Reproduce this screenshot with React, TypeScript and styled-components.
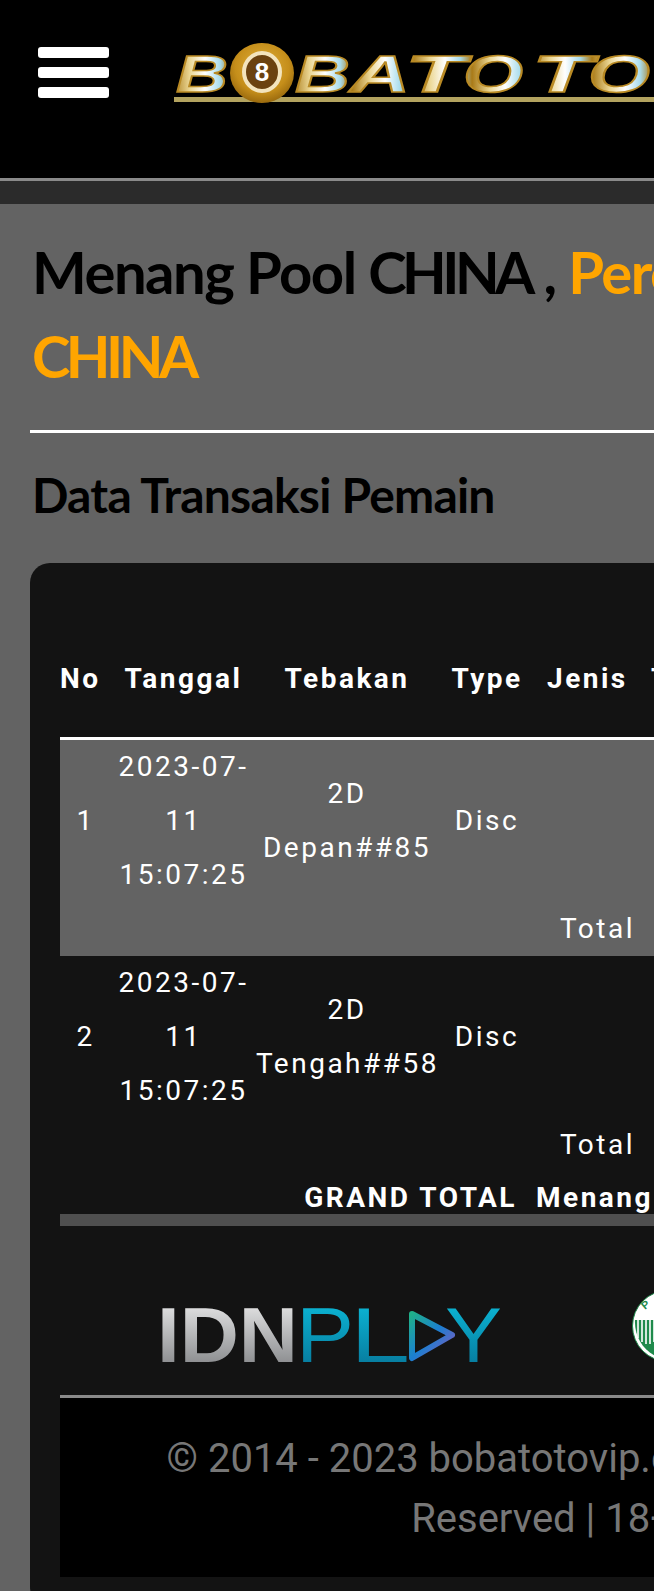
import React from 'react';
import styled, { createGlobalStyle } from 'styled-components';

const GlobalStyle = createGlobalStyle`
    html, body {
        margin: 0;
        width: 654px;
        height: 1591px;
        overflow: hidden;
        background: #636363;
    }
`;

type Row = {
    no: number;
    date: string;
    guess: string;
    type: string;
};

const rows: Row[] = [
    { no: 1, date: '2023-07-11 15:07:25', guess: '2D Depan##85', type: 'Disc' },
    { no: 2, date: '2023-07-11 15:07:25', guess: '2D Tengah##58', type: 'Disc' },
];

const BrandLetter = ({ x, w, c }: { x: number; w: number; c: string }) => (
    <BrandText x={x} y="49" textLength={w} lengthAdjust="spacingAndGlyphs">
        {c}
    </BrandText>
);

const BrandLogo = () => (
    <svg width="500" height="62" viewBox="0 0 500 62">
        <defs>
            <linearGradient id="gold" x1="0" x2="1" y1="0" y2="0" spreadMethod="repeat" gradientUnits="userSpaceOnUse" gradientTransform="scale(60 1)">
                <stop offset="0" stopColor="#a97a17" />
                <stop offset="0.3" stopColor="#ecd896" />
                <stop offset="0.55" stopColor="#ffffff" />
                <stop offset="0.8" stopColor="#a9dcec" />
                <stop offset="1" stopColor="#a97a17" />
            </linearGradient>
            <radialGradient id="ball" cx="0.5" cy="0.4" r="0.6">
                <stop offset="0" stopColor="#e3b23c" />
                <stop offset="0.7" stopColor="#c58e1a" />
                <stop offset="1" stopColor="#9a6a0e" />
            </radialGradient>
        </defs>
        <rect x="2" y="54" width="498" height="5" fill="#b3a35f" />
        <BrandLetter x={4} w={52} c="B" />
        <BrandLetter x={123} w={55} c="B" />
        <BrandLetter x={178} w={60} c="A" />
        <BrandLetter x={233} w={60} c="T" />
        <BrandLetter x={291} w={60} c="O" />
        <BrandLetter x={360} w={60} c="T" />
        <BrandLetter x={416} w={62} c="O" />
        <ellipse cx="90" cy="30" rx="32" ry="30" fill="url(#ball)" />
        <ellipse cx="90" cy="29" rx="18" ry="19" fill="#6b4210" stroke="#f3e4bd" strokeWidth="4" />
        <BallNumber x="90" y="38">8</BallNumber>
    </svg>
);

const IdnLogo = () => (
    <svg width="342" height="54" viewBox="0 0 342 54">
        <defs>
            <linearGradient id="silver" x1="0" x2="0" y1="0" y2="1">
                <stop offset="0" stopColor="#f4f4f4" />
                <stop offset="1" stopColor="#77797c" />
            </linearGradient>
            <linearGradient id="teal" x1="0" x2="0" y1="0" y2="1">
                <stop offset="0" stopColor="#0cc0de" />
                <stop offset="1" stopColor="#066f93" />
            </linearGradient>
            <linearGradient id="play" x1="0" x2="1" y1="0" y2="1">
                <stop offset="0" stopColor="#1fb08a" />
                <stop offset="0.5" stopColor="#1b7fd0" />
                <stop offset="1" stopColor="#8a58c0" />
            </linearGradient>
        </defs>
        <IdnText x="-3" y="54" fill="url(#silver)" textLength="141" lengthAdjust="spacingAndGlyphs">
            IDN
        </IdnText>
        <IdnThinText x="136" y="54" fill="url(#teal)" textLength="58" lengthAdjust="spacingAndGlyphs">
            P
        </IdnThinText>
        <IdnThinText x="190" y="54" fill="url(#teal)" textLength="60" lengthAdjust="spacingAndGlyphs">
            L
        </IdnThinText>
        <polygon points="252,6 292,27 252,50" fill="none" stroke="url(#play)" strokeWidth="6" strokeLinejoin="round" />
        <IdnThinText x="285" y="54" fill="url(#teal)" textLength="57" lengthAdjust="spacingAndGlyphs">
            Y
        </IdnThinText>
    </svg>
);

const SealLogo = () => (
    <svg width="72" height="72" viewBox="0 0 72 72">
        <circle cx="36" cy="36" r="35.5" fill="#fff" stroke="#1f8a4c" strokeWidth="1" />
        <SealLetter x="13" y="20" transform="rotate(-40 13 20)">P</SealLetter>
        <SealLetter x="24" y="13" transform="rotate(-20 24 13)">A</SealLetter>
        <path d="M3 30 H69 C70 50 56 68 36 69 C16 68 2 50 3 30 Z" fill="#1f8a4c" />
        <path d="M6 30 V48 M10 30 V52 M14 30 V54 M18 30 V54 M22 30 V52 M26 30 V50" stroke="#fff" strokeWidth="1.6" />
    </svg>
);

const App = () => {
    return (
        <StPage>
            <GlobalStyle />
            <StHeader>
                <StBurger aria-label="menu">
                    <span />
                    <span />
                    <span />
                </StBurger>
                <StBrand>
                    <BrandLogo />
                </StBrand>
            </StHeader>
            <StStrip />
            <StMain>
                <StTitle>
                    Menang Pool <StCaps>CHINA</StCaps> , <StAccent>Perolehan Pool</StAccent>
                    <br />
                    <StAccent>
                        <StCaps>CHINA</StCaps>
                    </StAccent>
                </StTitle>
                <StRule />
                <StSubTitle>Data Transaksi Pemain</StSubTitle>
                <StPanel>
                    <StTable>
                        <colgroup>
                            <col width="51" />
                            <col width="145" />
                            <col width="182" />
                            <col width="98" />
                            <col width="104" />
                            <col width="130" />
                            <col width="132" />
                            <col width="132" />
                        </colgroup>
                        <thead>
                            <tr>
                                <StTh $align="left">No</StTh>
                                <StTh>Tanggal</StTh>
                                <StTh>Tebakan</StTh>
                                <StTh>Type</StTh>
                                <StTh $align="left" $indent={11}>Jenis</StTh>
                                <StTh $align="left" $indent={11}>Taruhan</StTh>
                                <StTh>Diskon</StTh>
                                <StTh>Menang</StTh>
                            </tr>
                        </thead>
                        <tbody>
                            {rows.map((row) => (
                                <React.Fragment key={row.no}>
                                    <StRow $alt={row.no % 2 === 1}>
                                        <StTd>{row.no}</StTd>
                                        <StTd>{row.date}</StTd>
                                        <StTd>{row.guess}</StTd>
                                        <StTd>{row.type}</StTd>
                                        <StTd />
                                        <StTd />
                                        <StTd />
                                        <StTd />
                                    </StRow>
                                    <StRow $alt={row.no % 2 === 1}>
                                        <StTd colSpan={4} />
                                        <StTotal>Total</StTotal>
                                        <StTd colSpan={3} />
                                    </StRow>
                                </React.Fragment>
                            ))}
                            <tr>
                                <StGrand colSpan={4}>GRAND TOTAL</StGrand>
                                <StGrandValue colSpan={4}>Menang</StGrandValue>
                            </tr>
                            <tr>
                                <StBar colSpan={8} />
                            </tr>
                        </tbody>
                    </StTable>
                    <StPartners>
                        <IdnLogo />
                        <SealLogo />
                    </StPartners>
                    <StFooter>
                        © 2014 - 2023 bobatotovip.com | All Rights
                        <br />
                        Reserved | 18+&nbsp;
                    </StFooter>
                </StPanel>
            </StMain>
        </StPage>
    );
};

export default App;

const StPage = styled.div`
    width: 1094px;
    background: #636363;
`;
const StHeader = styled.header`
    display: flex;
    align-items: flex-start;
    height: 178px;
    background: #000;
    border-bottom: 3px solid #8a8a8a;
`;
const StBurger = styled.div`
    display: flex;
    flex-direction: column;
    gap: 9px;
    width: 71px;
    margin: 47px 0 0 38px;
    span {
        display: block;
        height: 11px;
        background: #fff;
        border-radius: 3px;
    }
`;
const StBrand = styled.div`
    margin: 43px 0 0 63px;
`;
const BrandText = styled.text`
    font-family: 'Liberation Sans', sans-serif;
    font-size: 52px;
    font-weight: 700;
    font-style: italic;
    fill: url(#gold);
    stroke: #b98a24;
    stroke-width: 1.5px;
`;
const BallNumber = styled.text`
    font-family: 'Liberation Sans', sans-serif;
    font-size: 26px;
    font-weight: 700;
    text-anchor: middle;
    fill: #fff;
`;
const IdnText = styled.text`
    font-family: 'Liberation Sans', sans-serif;
    font-size: 78px;
    font-weight: 700;
`;
const IdnThinText = styled.text`
    font-family: 'Liberation Sans', sans-serif;
    font-size: 78px;
    font-weight: 400;
`;
const SealLetter = styled.text`
    font-family: 'Liberation Sans', sans-serif;
    font-size: 11px;
    font-weight: 700;
    fill: #1f8a4c;
`;
const StStrip = styled.div`
    height: 23px;
    background: #2b2b2b;
`;
const StMain = styled.main`
    padding: 0 30px;
`;
const StTitle = styled.h1`
    margin: 0;
    padding: 26px 0 0 2px;
    font-family: Lato, sans-serif;
    font-size: 58px;
    font-weight: 700;
    line-height: 84px;
    letter-spacing: -1.5px;
    white-space: nowrap;
    color: #000;
`;
const StCaps = styled.span`
    letter-spacing: -4.5px;
`;
const StAccent = styled.span`
    color: #ffa500;
`;
const StRule = styled.hr`
    height: 3px;
    margin: 32px 0 0;
    border: 0;
    background: #fff;
`;
const StSubTitle = styled.h3`
    margin: 0;
    padding: 27px 0 33px 2px;
    font-family: Lato, sans-serif;
    font-size: 48px;
    font-weight: 700;
    line-height: 70px;
    letter-spacing: -0.8px;
    color: #000;
`;
const StPanel = styled.section`
    padding: 30px;
    background: #131313;
    border-radius: 20px;
`;
const StTable = styled.table`
    width: 974px;
    table-layout: fixed;
    border-collapse: separate;
    border-spacing: 0;
    font-family: Roboto, sans-serif;
    font-size: 28px;
    letter-spacing: 2.5px;
    color: #fff;
`;
const StTh = styled.th<{ $align?: string; $indent?: number }>`
    box-sizing: border-box;
    height: 147px;
    padding: 26px 0 0 ${(p) => p.$indent ?? 0}px;
    border-bottom: 3px solid #fff;
    text-align: ${(p) => p.$align ?? 'center'};
    font-weight: 700;
    white-space: nowrap;
`;
const StRow = styled.tr<{ $alt: boolean }>`
    background: ${(p) => (p.$alt ? '#636363' : 'transparent')};
`;
const StTd = styled.td`
    padding: 0;
    line-height: 54px;
    text-align: center;
    vertical-align: middle;
`;
const StTotal = styled(StTd)`
    padding-right: 5px;
    text-align: right;
`;
const StGrand = styled.td`
    padding: 10px 19px 0 0;
    line-height: 32px;
    text-align: right;
    font-weight: 700;
    white-space: nowrap;
`;
const StGrandValue = styled.td`
    padding: 10px 0 0;
    line-height: 32px;
    font-weight: 700;
    white-space: nowrap;
`;
const StBar = styled.td`
    height: 12px;
    padding: 0;
    background: #4f4f4f;
`;
const StPartners = styled.div`
    display: flex;
    align-items: flex-end;
    gap: 130px;
    padding: 64px 0 33px 100px;
`;
const StFooter = styled.footer`
    padding: 31px 0 28px;
    background: #000;
    border-top: 3px solid #8a8a8a;
    font-family: Roboto, sans-serif;
    font-size: 40px;
    font-weight: 400;
    line-height: 60px;
    text-align: center;
    color: #777;
`;
